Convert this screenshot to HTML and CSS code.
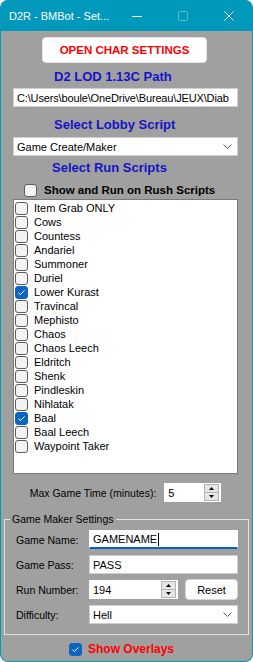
FILE: index.html
```html
<!DOCTYPE html>
<html lang="en">
<head>
    <meta charset="UTF-8">
    <title>D2R - BMBot - Settings</title>
    <link rel="stylesheet" href="styles.css">
</head>
<body>
    <div class="window">
        <div class="titlebar">
            <span class="title">D2R - BMBot - Set...</span>
            <div class="caption">
                <span class="cap-btn">
                    <svg width="10" height="10" viewBox="0 0 10 10"><path d="M0 5.5 H10" stroke="#fff" stroke-width="1"/></svg>
                </span>
                <span class="cap-btn disabled">
                    <svg width="10" height="10" viewBox="0 0 10 10"><rect x="0.5" y="0.5" width="9" height="9" rx="1" fill="none" stroke="#fff" stroke-width="1"/></svg>
                </span>
                <span class="cap-btn">
                    <svg width="10" height="10" viewBox="0 0 10 10"><path d="M0.5 0.5 L9.5 9.5 M9.5 0.5 L0.5 9.5" stroke="#fff" stroke-width="1"/></svg>
                </span>
            </div>
        </div>

        <div class="content">
            <button class="char-btn">OPEN CHAR SETTINGS</button>

            <div class="heading h-path">D2 LOD 1.13C Path</div>
            <div class="textbox path">C:\Users\boule\OneDrive\Bureau\JEUX\Diab</div>

            <div class="heading h-lobby">Select Lobby Script</div>
            <div class="combo">
                <span>Game Create/Maker</span>
                <svg class="chevron" width="9" height="5" viewBox="0 0 9 5"><path d="M0.5 0.5 L4.5 4.5 L8.5 0.5" fill="none" stroke="#606060" stroke-width="1"/></svg>
            </div>

            <div class="heading h-run">Select Run Scripts</div>
            <label class="rush">
                <span class="box"></span>
                <span>Show and Run on Rush Scripts</span>
            </label>

            <div class="listbox" id="scripts"></div>

            <div class="max-row">
                <span>Max Game Time (minutes):</span>
                <div class="textbox num">
                    <span>5</span>
                    <span class="spin">
                        <span class="spin-half"><svg width="5" height="3" viewBox="0 0 5 3"><path d="M0 3 L2.5 0 L5 3 Z" fill="#000"/></svg></span>
                        <span class="spin-half"><svg width="5" height="3" viewBox="0 0 5 3"><path d="M0 0 L2.5 3 L5 0 Z" fill="#000"/></svg></span>
                    </span>
                </div>
            </div>

            <fieldset class="group">
                <legend>Game Maker Settings</legend>
                <div class="field">
                    <span class="label">Game Name:</span>
                    <div class="textbox wide focused"><span>GAMENAME</span><span class="caret"></span></div>
                </div>
                <div class="field">
                    <span class="label">Game Pass:</span>
                    <div class="textbox wide">PASS</div>
                </div>
                <div class="field">
                    <span class="label">Run Number:</span>
                    <div class="textbox num run">
                        <span>194</span>
                        <span class="spin">
                            <span class="spin-half"><svg width="5" height="3" viewBox="0 0 5 3"><path d="M0 3 L2.5 0 L5 3 Z" fill="#000"/></svg></span>
                            <span class="spin-half"><svg width="5" height="3" viewBox="0 0 5 3"><path d="M0 0 L2.5 3 L5 0 Z" fill="#000"/></svg></span>
                        </span>
                    </div>
                    <button class="reset-btn">Reset</button>
                </div>
                <div class="field">
                    <span class="label">Difficulty:</span>
                    <div class="combo wide">
                        <span>Hell</span>
                        <svg class="chevron" width="9" height="5" viewBox="0 0 9 5"><path d="M0.5 0.5 L4.5 4.5 L8.5 0.5" fill="none" stroke="#606060" stroke-width="1"/></svg>
                    </div>
                </div>
            </fieldset>

            <label class="overlays">
                <span class="box checked"></span>
                <span>Show Overlays</span>
            </label>
        </div>
    </div>

    <script>
        // run scripts shown in the checked list box
        const scripts = [
            ['Item Grab ONLY', false], ['Cows', false], ['Countess', false],
            ['Andariel', false], ['Summoner', false], ['Duriel', false],
            ['Lower Kurast', true], ['Travincal', false], ['Mephisto', false],
            ['Chaos', false], ['Chaos Leech', false], ['Eldritch', false],
            ['Shenk', false], ['Pindleskin', false], ['Nihlatak', false],
            ['Baal', true], ['Baal Leech', false], ['Waypoint Taker', false]
        ];

        const list = document.getElementById('scripts');
        scripts.forEach(function(s) {
            const row = document.createElement('div');
            row.className = 'item';
            row.innerHTML = '<span class="box' + (s[1] ? ' checked' : '') + '"></span><span>' + s[0] + '</span>';
            list.appendChild(row);
        });
    </script>
</body>
</html>
```

FILE: styles.css
```css
:root {
    --accent: #0099bc;
    --form-bg: #a0a0a0;
    --heading: #1414c8;
    --check: #0a64c2;
    --red: #ff0000;
}

body {
    margin: 0;
    background-color: #ffffff;
    font-family: 'Liberation Sans', Arial, sans-serif;
    font-size: 10.5px;
    color: #000;
}

.window {
    width: 253px;
    height: 662px;
    box-sizing: border-box;
    border: 1px solid var(--accent);
    border-top: none;
    border-radius: 8px;
    background-color: var(--form-bg);
    overflow: hidden;
    display: flex;
    flex-direction: column;
}

/* title bar */

.titlebar {
    height: 31px;
    flex-shrink: 0;
    background-color: var(--accent);
    display: flex;
    align-items: center;
    justify-content: space-between;
}

.title {
    color: #fff;
    font-size: 11px;
    padding-left: 8px;
}

.caption {
    display: flex;
    height: 100%;
}

.cap-btn {
    width: 46px;
    display: flex;
    align-items: center;
    justify-content: center;
}

.cap-btn.disabled svg {
    opacity: 0.35;
}

/* form content */

.content {
    display: flex;
    flex-direction: column;
    padding: 6px 14px 0 12px;
}

.char-btn {
    width: 165px;
    height: 26px;
    margin-left: 29px;
    padding: 0;
    background-color: #fff;
    border: 1px solid #e4e4e4;
    border-radius: 4px;
    color: var(--red);
    font-family: 'Liberation Sans', Arial, sans-serif;
    font-weight: bold;
    font-size: 11.5px;
}

.heading {
    height: 20px;
    line-height: 20px;
    color: var(--heading);
    font-weight: bold;
    font-size: 13px;
    white-space: nowrap;
}

.h-path {
    margin-top: 4px;
    padding-left: 41px;
}

.h-lobby {
    margin-top: 8px;
    padding-left: 41px;
}

.h-run {
    margin-top: 2px;
    padding-left: 39px;
}

.textbox,
.combo {
    height: 19px;
    box-sizing: border-box;
    background-color: #fff;
    border: 1px solid #cfcfcf;
    display: flex;
    align-items: center;
    padding-left: 3px;
    white-space: nowrap;
    overflow: hidden;
    font-size: 11px;
}

.path {
    margin-top: 1px;
    letter-spacing: -0.15px;
}

.combo {
    margin-top: 2px;
    justify-content: space-between;
    padding-right: 5px;
}

.chevron {
    flex-shrink: 0;
}

/* checkboxes */

.box {
    width: 13px;
    height: 13px;
    box-sizing: border-box;
    flex-shrink: 0;
    border: 1px solid #5c5c5c;
    border-radius: 3px;
    background-color: #f3f3f3;
}

.box.checked {
    border-color: var(--check);
    background-color: var(--check);
    background-image: url("data:image/svg+xml,%3Csvg xmlns='http://www.w3.org/2000/svg' width='11' height='11' viewBox='0 0 11 11'%3E%3Cpath d='M2.5 5.8 L4.4 7.6 L8.5 3.4' fill='none' stroke='white' stroke-width='1'/%3E%3C/svg%3E");
    background-repeat: no-repeat;
    background-position: center;
}

.rush {
    margin-top: 5px;
    height: 14px;
    display: flex;
    align-items: center;
    gap: 7px;
    padding-left: 11px;
    font-weight: bold;
    font-size: 11.5px;
}

.listbox {
    margin-top: 2px;
    height: 275px;
    box-sizing: border-box;
    background-color: #fff;
    border: 1px solid #7a7a7a;
    padding: 1px 0 0 1px;
}

.item {
    height: 14px;
    display: flex;
    align-items: center;
    gap: 6px;
    font-size: 11px;
}

.max-row {
    margin-top: 9px;
    display: flex;
    align-items: center;
    justify-content: center;
    gap: 8px;
    font-size: 10.5px;
}

.num {
    width: 57px;
    justify-content: space-between;
    padding-right: 1px;
    border-color: #fff;
}

.spin {
    width: 15px;
    height: 17px;
    box-sizing: border-box;
    display: flex;
    flex-direction: column;
    border: 1px solid #b4b4b4;
    background-color: #e6e6e6;
}

.spin-half {
    flex: 1;
    display: flex;
    align-items: center;
    justify-content: center;
}

.spin-half + .spin-half {
    border-top: 1px solid #b4b4b4;
}

/* game maker group */

.group {
    margin: 10px -11px 0 -9px;
    padding: 4px 9px 10px 11px;
    border: 1px solid #e2e2e2;
    display: flex;
    flex-direction: column;
    gap: 6px;
}

.group legend {
    padding: 0 2px;
    margin-left: -6px;
    line-height: 14px;
    font-size: 10.5px;
}

.field {
    display: flex;
    align-items: center;
    height: 19px;
    font-size: 10.5px;
}

.field .textbox,
.field .combo {
    font-size: 11px;
}

.label {
    width: 73px;
    flex-shrink: 0;
}

.wide {
    width: 149px;
    margin-top: 0;
}

.focused {
    border-color: #fff;
    border-bottom: 2px solid #0064c0;
}

.caret {
    width: 1px;
    height: 13px;
    background-color: #000;
    margin-left: 1px;
}

.run {
    width: 89px;
}

.reset-btn {
    width: 53px;
    height: 21px;
    margin-left: 7px;
    padding: 0;
    background-color: #fdfdfd;
    border: 1px solid #d6d6d6;
    border-radius: 4px;
    font-family: 'Liberation Sans', Arial, sans-serif;
    font-size: 11px;
    color: #000;
}

.overlays {
    margin-top: 7px;
    height: 14px;
    display: flex;
    align-items: center;
    justify-content: center;
    gap: 6px;
    margin-right: 8px;
    color: var(--red);
    font-weight: bold;
    font-size: 12px;
}
```
